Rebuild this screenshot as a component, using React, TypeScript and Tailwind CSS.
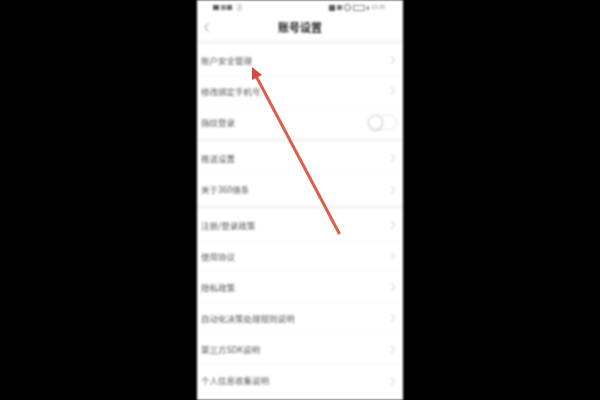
import { ChevronLeft, ChevronRight } from 'lucide-react';

type Row = { label: string; toggle?: boolean };

const groups: Row[][] = [
  [{ label: '账户安全管理' }, { label: '修改绑定手机号' }, { label: '指纹登录', toggle: true }],
  [{ label: '推送设置' }, { label: '关于360借条' }],
  [
    { label: '注册/登录政策' },
    { label: '使用协议' },
    { label: '隐私政策' },
    { label: '自动化决策处理规则说明' },
    { label: '第三方SDK说明' },
    { label: '个人信息收集说明' },
  ],
];

function SettingRow({ label, toggle, last }: Row & { last: boolean }) {
  return (
    <div className={`flex h-[31px] items-center justify-between pl-[4px] ${toggle ? 'pr-[6px]' : 'pr-[3px]'} ${last ? '' : 'border-b border-[#fafafa]'}`}>
      <span className="text-[8.5px] leading-none text-[#555]">{label}</span>
      {toggle ? (
        <div className="relative h-[15px] w-[29px] rounded-full border border-[#e8e8e8] bg-white">
          <div className="absolute left-[-1px] top-[-1px] h-[15px] w-[15px] rounded-full border border-[#cccccc] bg-white shadow-sm" />
        </div>
      ) : (
        <ChevronRight size={14} strokeWidth={1.75} className="text-[#cdcdcd]" />
      )}
    </div>
  );
}

export default function App() {
  return (
    <div className="relative flex h-[400px] w-[600px] justify-center overflow-hidden bg-black font-['Noto_Sans_CJK_SC',sans-serif]">
      <div className="flex h-[400px] w-[206px] flex-col bg-white blur-[0.8px]">
        <div className="flex h-[13px] items-center justify-between pl-[16px] pr-[18px] pt-[2px] text-[5.5px] leading-none text-[#888]">
          <div className="flex items-center gap-[1px]">
            <span className="h-[5px] w-[6px] bg-[#555]" />
            <span className="ml-[1px] h-[5px] w-[5px] bg-[#888]" />
            <span className="h-[5px] w-[5px] bg-[#666]" />
            <span className="ml-[4px] h-[7px] w-[5px] bg-[#ddd]" />
          </div>
          <div className="flex items-center gap-[2px]">
            <span className="h-[6px] w-[6px] bg-[#555]" />
            <span className="h-[5px] w-[5px] bg-[#777]" />
            <span className="h-[7px] w-[7px] rounded-full border border-[#555]" />
            <span className="h-[6px] w-[12px] border border-[#888]" />
            <span className="h-[4px] w-[2px] bg-[#888]" />
            <span>15:38</span>
          </div>
        </div>
        <div className="relative flex h-[27px] items-center justify-center pt-[1px]">
          <ChevronLeft size={15} strokeWidth={1.5} className="absolute left-[2px] text-[#777]" />
          <span className="font-['Noto_Sans_CJK_SC',sans-serif] text-[11px] font-bold leading-none text-[#222]">账号设置</span>
        </div>
        <div className="flex flex-col">
          {groups.map((group, i) => (
            <div key={i} className="border-t-[4px] border-[#f5f5f5] pt-[1px]">
              {group.map((row, j) => (
                <SettingRow key={row.label} {...row} last={j === group.length - 1} />
              ))}
            </div>
          ))}
        </div>
      </div>
      <svg className="absolute left-0 top-0 blur-[0.6px]" width="600" height="400" viewBox="0 0 600 400">
        <line x1="339" y1="233" x2="256" y2="76" stroke="#d9604f" strokeWidth="3" strokeLinecap="round" />
        <polygon points="252,67 262,75 252,80" fill="#d9483c" />
      </svg>
    </div>
  );
}
